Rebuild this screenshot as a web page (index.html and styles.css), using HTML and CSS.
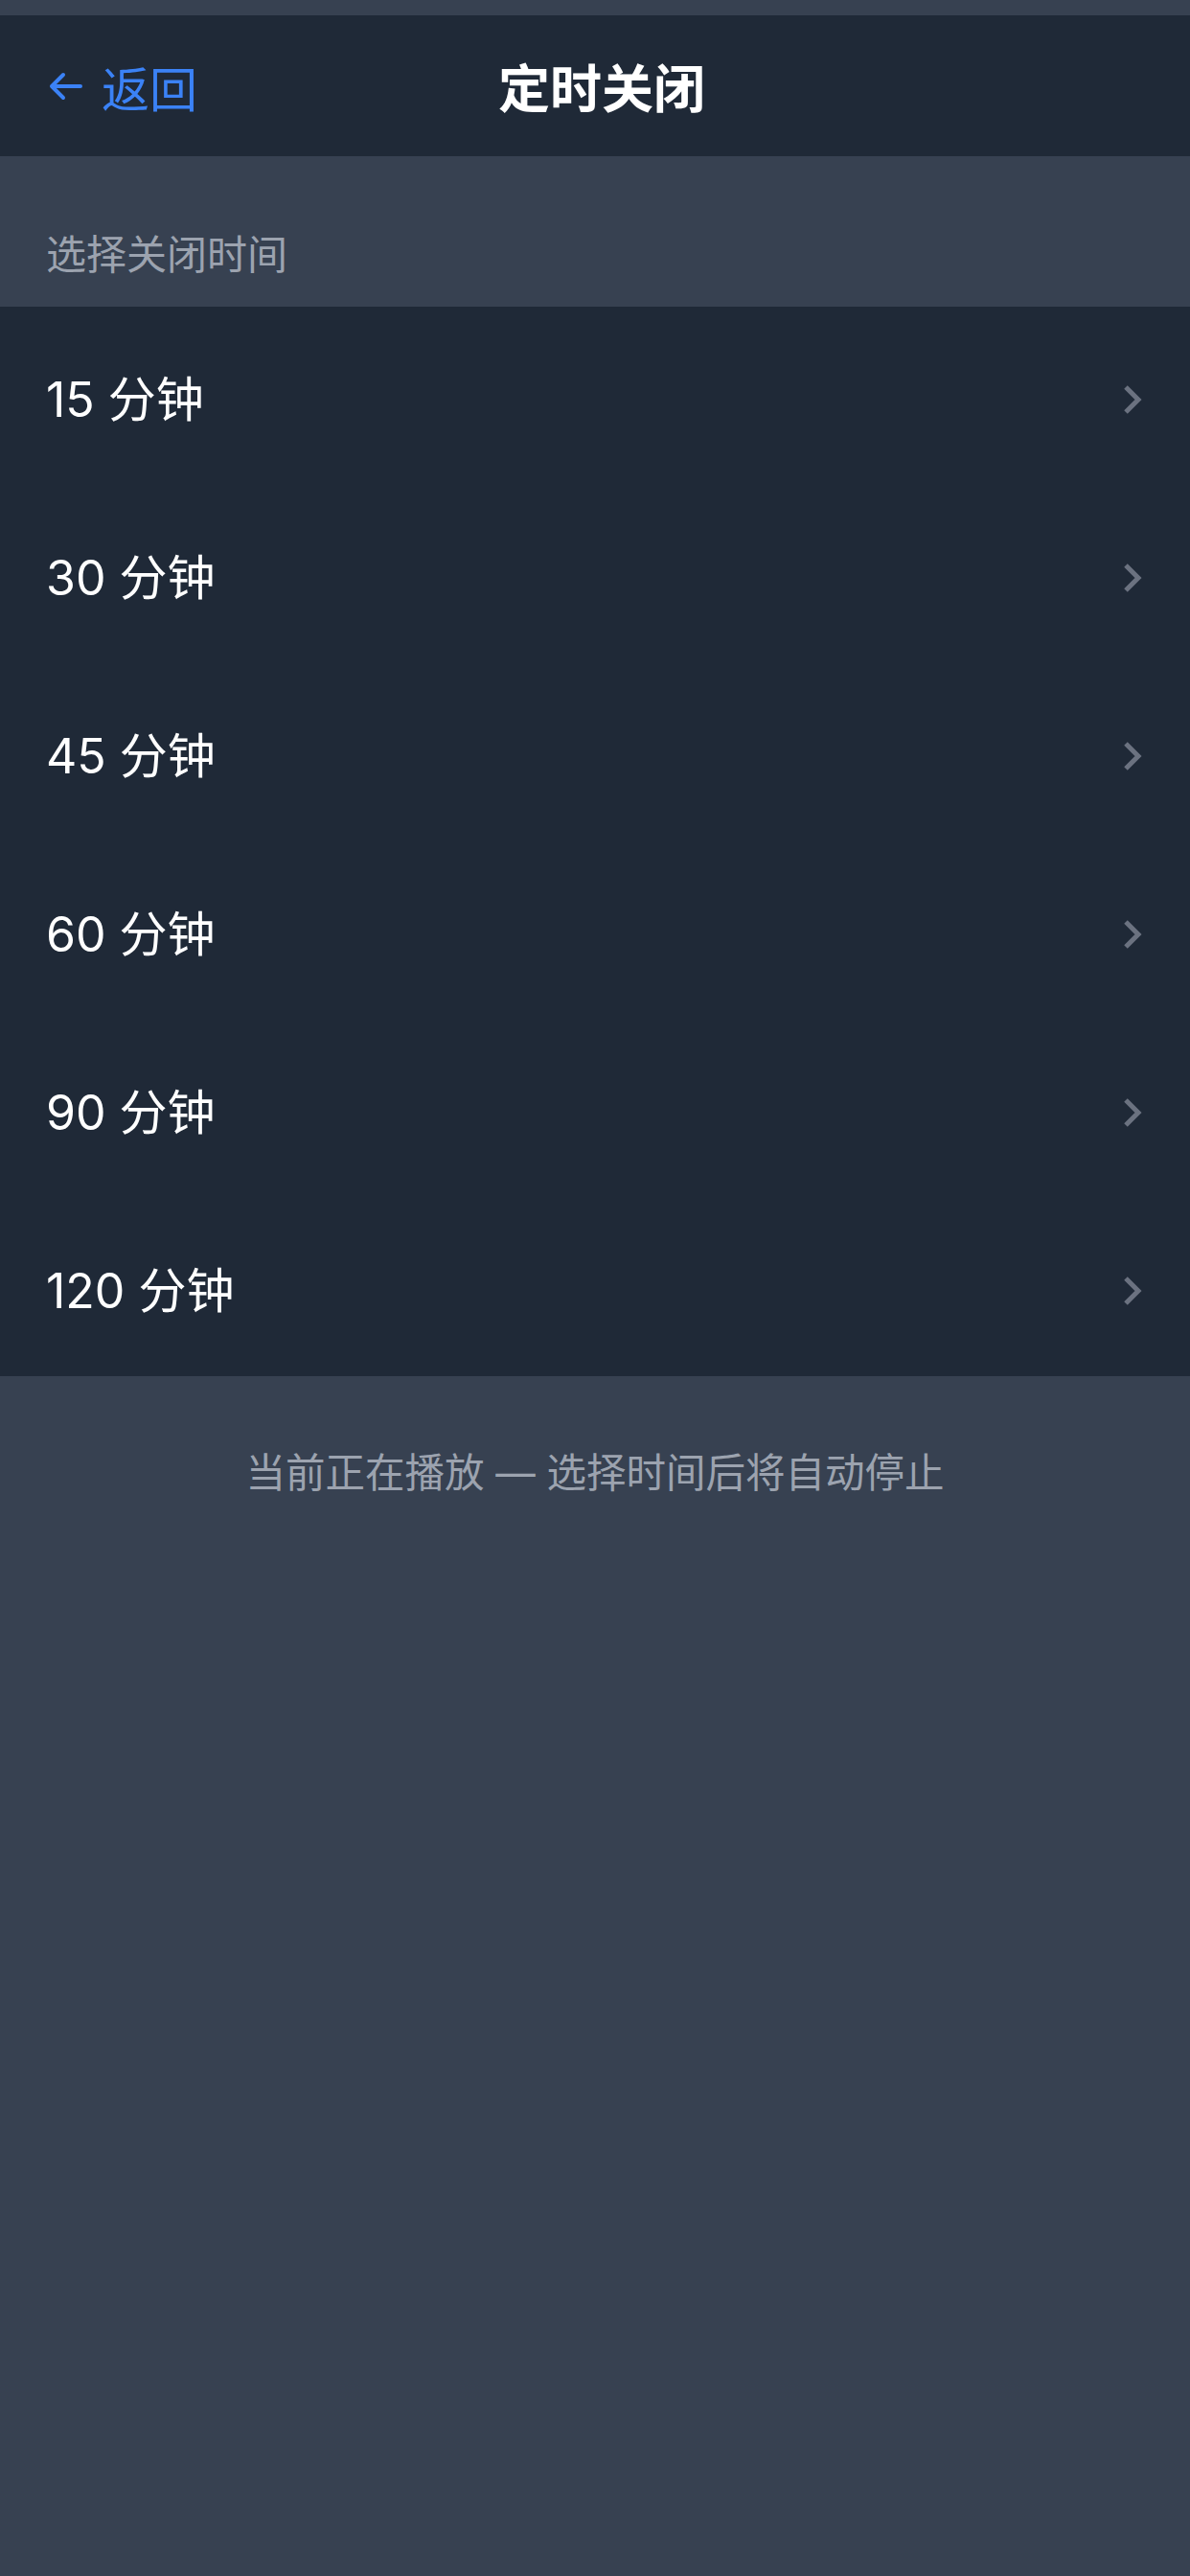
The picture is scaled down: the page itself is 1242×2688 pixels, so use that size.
FILE: index.html
```html
<!DOCTYPE html>
<html lang="zh-CN">
<head>
    <meta charset="UTF-8">
    <meta name="viewport" content="width=device-width, initial-scale=1.0">
    <title>定时关闭</title>
    <link rel="stylesheet" href="styles.css">
</head>
<body>

    <div class="status-strip"></div>

    <header class="nav-bar">
        <a class="back-link" href="#">
            <svg class="back-icon" width="36" height="30" viewBox="0 0 36 30">
                <path d="M34 15 H4 M16 3 L4 15 L16 27" fill="none" stroke="#3b82f6" stroke-width="4" stroke-linecap="round" stroke-linejoin="round"/>
            </svg>
            <span>返回</span>
        </a>
        <h1 class="nav-title">定时关闭</h1>
        <div class="nav-spacer"></div>
    </header>

    <div class="section-header">选择关闭时间</div>

    <ul class="option-list">
        <li class="option-row"><span>15 分钟</span><svg class="chevron" width="20" height="30" viewBox="0 0 20 30"><path d="M3 2 L16 15 L3 28" fill="none" stroke="#6b7280" stroke-width="5"/></svg></li>
        <li class="option-row"><span>30 分钟</span><svg class="chevron" width="20" height="30" viewBox="0 0 20 30"><path d="M3 2 L16 15 L3 28" fill="none" stroke="#6b7280" stroke-width="5"/></svg></li>
        <li class="option-row"><span>45 分钟</span><svg class="chevron" width="20" height="30" viewBox="0 0 20 30"><path d="M3 2 L16 15 L3 28" fill="none" stroke="#6b7280" stroke-width="5"/></svg></li>
        <li class="option-row"><span>60 分钟</span><svg class="chevron" width="20" height="30" viewBox="0 0 20 30"><path d="M3 2 L16 15 L3 28" fill="none" stroke="#6b7280" stroke-width="5"/></svg></li>
        <li class="option-row"><span>90 分钟</span><svg class="chevron" width="20" height="30" viewBox="0 0 20 30"><path d="M3 2 L16 15 L3 28" fill="none" stroke="#6b7280" stroke-width="5"/></svg></li>
        <li class="option-row"><span>120 分钟</span><svg class="chevron" width="20" height="30" viewBox="0 0 20 30"><path d="M3 2 L16 15 L3 28" fill="none" stroke="#6b7280" stroke-width="5"/></svg></li>
    </ul>

    <p class="footer-note">当前正在播放 — 选择时间后将自动停止</p>

</body>
</html>
```

FILE: styles.css
```css
* {
    margin: 0;
    padding: 0;
    box-sizing: border-box;
}
body {
    font-family: Inter, "Noto Sans CJK SC", sans-serif;
    background-color: #374151;
    color: #f9fafb;
    min-height: 2688px;
}
.status-strip {
    height: 16px;
}
.nav-bar {
    display: grid;
    grid-template-columns: 1fr auto 1fr;
    align-items: center;
    height: 147px;
    padding: 0 34px 0 48px;
    background-color: #1f2937;
}
.back-link {
    display: flex;
    align-items: center;
    gap: 20px;
    color: #3b82f6;
    font-size: 50px;
    text-decoration: none;
}
.back-icon {
    margin-left: 2px;
}
.nav-title {
    font-size: 54px;
    font-weight: 700;
    color: #ffffff;
}
.section-header {
    padding: 74px 48px 24px;
    font-size: 42px;
    line-height: 1.4;
    color: #9ca3af;
}
.option-list {
    list-style: none;
    background-color: #1f2937;
}
.option-row {
    display: flex;
    align-items: center;
    justify-content: space-between;
    height: 186px;
    padding: 0 50px 0 48px;
    font-size: 50px;
    color: #ffffff;
}
.chevron {
    margin-top: 8px;
}
.footer-note {
    padding-top: 72px;
    text-align: center;
    font-size: 41.5px;
    line-height: 1.4;
    color: #9ca3af;
}
```
